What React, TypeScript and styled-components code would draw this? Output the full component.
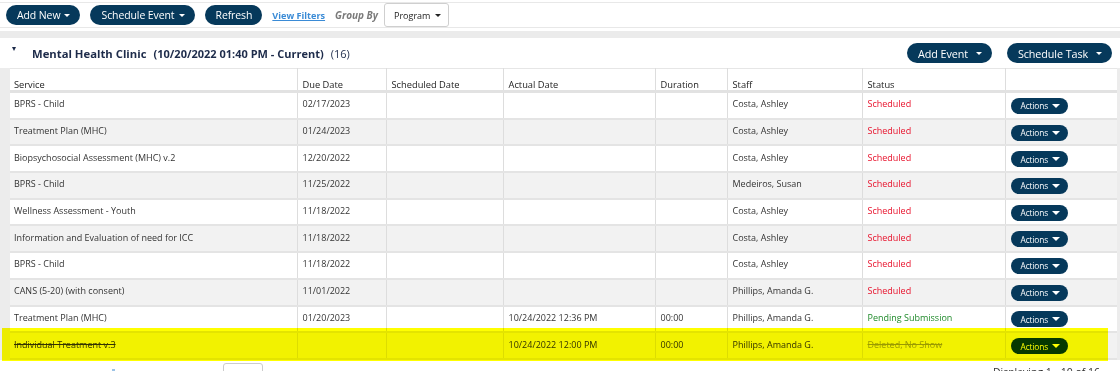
import styled, { createGlobalStyle } from 'styled-components'

const GlobalStyle = createGlobalStyle`
    body {
        margin: 0;
        background: #fff;
        font-family: 'Open Sans', 'Noto Sans', sans-serif;
        color: #333;
    }
`

const NAVY = '#06395b'

const Toolbar = styled.div`
    display: flex;
    align-items: center;
    gap: 10px;
    height: 24px;
    padding: 0 6px;
    margin-top: 2px;
    border-top: 1px solid #e8e8e8;
    border-bottom: 1px solid #e8e8e8;
`
const PillButton = styled.button<{ size?: 'sm' | 'md'; spread?: boolean }>`
    display: inline-flex;
    align-items: center;
    gap: ${p => (p.spread ? '8px' : '4px')};
    height: ${p => (p.size === 'sm' ? '16px' : '20px')};
    padding: ${p => (p.size === 'sm' ? '0 8px 0 10px' : '0 10px 0 11px')};
    border: none;
    border-radius: 10px;
    background: ${NAVY};
    color: #fff;
    font-family: 'Open Sans', sans-serif;
    font-size: ${p => (p.size === 'sm' ? '8.3px' : p.spread ? '10.8px' : '10.5px')};
    letter-spacing: -0.1px;
    white-space: nowrap;
    cursor: pointer;
`
const Caret = styled.span<{ w?: number; h?: number }>`
    width: 0;
    height: 0;
    border-left: ${p => (p.w ?? 7) / 2}px solid transparent;
    border-right: ${p => (p.w ?? 7) / 2}px solid transparent;
    border-top: ${p => p.h ?? 4}px solid currentColor;
`
const FilterLink = styled.a`
    color: #3a8bd6;
    font-weight: 700;
    font-size: 9.1px;
    text-decoration: underline;
    cursor: pointer;
`
const GroupLabel = styled.span`
    color: #7a7a7a;
    font-style: italic;
    font-weight: 700;
    font-size: 10px;
`
const Select = styled.div`
    display: flex;
    align-items: center;
    gap: 5px;
    height: 24px;
    box-sizing: border-box;
    padding: 0 7px 0 9px;
    margin-left: -4px;
    border: 1px solid #cfcfcf;
    border-radius: 3px;
    background: #fff;
    color: #222;
    font-size: 9px;
`
const Band = styled.div`
    height: 7px;
    margin-top: 3px;
    background: #ebebeb;
`
const PanelHeader = styled.div`
    display: flex;
    align-items: center;
    justify-content: space-between;
    height: 30px;
    padding: 0 8px 0 12px;
`
const Title = styled.div`
    display: flex;
    align-items: baseline;
    color: #1d2b4a;
`
const TitleCaret = styled.span`
    width: 0;
    height: 0;
    border-left: 2.5px solid transparent;
    border-right: 2.5px solid transparent;
    border-top: 4px solid #1d2b4a;
    margin-right: 16px;
    position: relative;
    top: -7px;
`
const TitleMain = styled.span`
    font-weight: 700;
    font-size: 11.3px;
    margin-right: 7px;
`
const TitleSub = styled.span<{ bold?: boolean }>`
    font-weight: ${p => (p.bold ? 700 : 400)};
    font-size: 11px;
    margin-right: 7px;
`
const HeaderActions = styled.div`
    display: flex;
    gap: 15px;
`
const Body = styled.div`
    position: relative;
    display: flex;
    padding: 0 3px 0 10px;
    background: #ececec;
`
const Table = styled.table`
    width: 1107px;
    border-collapse: collapse;
    table-layout: fixed;
    background: #fff;
    font-size: 9px;
    border-top: 1px solid #e6e6e6;
`
const Th = styled.th`
    height: 21px;
    padding: 0 4px 0 5px;
    line-height: 11px;
    text-align: left;
    vertical-align: bottom;
    font-weight: 400;
    font-size: 9.3px;
    color: #222;
    border-left: 1px solid #ddd;
    border-bottom: 3px solid #e2e2e2;
    &:first-child { border-left: none; padding-left: 4px; }
`
const Tr = styled.tr<{ striped: boolean }>`
    background: ${p => (p.striped ? '#f2f2f2' : '#fff')};
`
type Tone = 'red' | 'green' | 'gray' | 'plain'
const toneColor: Record<Tone, string> = {
    red: '#e8102a',
    green: '#1f8a2a',
    gray: '#9a9a9a',
    plain: '#333',
}
const Td = styled.td<{ tone?: Tone; struck?: boolean }>`
    height: 21.7px;
    padding: 0 4px 3px 5px;
    vertical-align: middle;
    white-space: nowrap;
    overflow: hidden;
    border-left: 1px solid #ddd;
    border-bottom: 2px solid #e4e4e4;
    color: ${p => toneColor[p.tone ?? 'plain']};
    text-decoration: ${p => (p.struck ? 'line-through' : 'none')};
    &:first-child { border-left: none; padding-left: 4px; }
`
const ActionCell = styled.td`
    padding: 1px 5px 0;
    vertical-align: middle;
    border-left: 1px solid #ddd;
    border-bottom: 2px solid #e4e4e4;
`
const Highlight = styled.div`
    position: absolute;
    left: 2px;
    right: 12px;
    bottom: -1px;
    height: 33px;
    background: #ffff00;
    mix-blend-mode: multiply;
    pointer-events: none;
`
const Footer = styled.div`
    display: flex;
    align-items: flex-start;
    justify-content: space-between;
    height: 30px;
    padding: 3px 20px 0 112px;
    font-size: 10.5px;
    color: #333;
`
const FooterLeft = styled.div`
    display: flex;
    align-items: flex-start;
`
const PagerDot = styled.span`
    width: 3px;
    height: 3px;
    margin-top: 6px;
    background: #9cc3e6;
`
const PageBox = styled.div`
    width: 38px;
    height: 20px;
    margin-left: 108px;
    border: 1px solid #ccc;
    border-radius: 3px;
`
const Displaying = styled.span`
    margin-top: 2px;
`

type Row = {
    service: string
    due: string
    actual: string
    duration: string
    staff: string
    status: string
    tone: Tone
    deleted?: boolean
}

const rows: Row[] = [
    { service: 'BPRS - Child', due: '02/17/2023', actual: '', duration: '', staff: 'Costa, Ashley', status: 'Scheduled', tone: 'red' },
    { service: 'Treatment Plan (MHC)', due: '01/24/2023', actual: '', duration: '', staff: 'Costa, Ashley', status: 'Scheduled', tone: 'red' },
    { service: 'Biopsychosocial Assessment (MHC) v.2', due: '12/20/2022', actual: '', duration: '', staff: 'Costa, Ashley', status: 'Scheduled', tone: 'red' },
    { service: 'BPRS - Child', due: '11/25/2022', actual: '', duration: '', staff: 'Medeiros, Susan', status: 'Scheduled', tone: 'red' },
    { service: 'Wellness Assessment - Youth', due: '11/18/2022', actual: '', duration: '', staff: 'Costa, Ashley', status: 'Scheduled', tone: 'red' },
    { service: 'Information and Evaluation of need for ICC', due: '11/18/2022', actual: '', duration: '', staff: 'Costa, Ashley', status: 'Scheduled', tone: 'red' },
    { service: 'BPRS - Child', due: '11/18/2022', actual: '', duration: '', staff: 'Costa, Ashley', status: 'Scheduled', tone: 'red' },
    { service: 'CANS (5-20) (with consent)', due: '11/01/2022', actual: '', duration: '', staff: 'Phillips, Amanda G.', status: 'Scheduled', tone: 'red' },
    { service: 'Treatment Plan (MHC)', due: '01/20/2023', actual: '10/24/2022 12:36 PM', duration: '00:00', staff: 'Phillips, Amanda G.', status: 'Pending Submission', tone: 'green' },
    { service: 'Individual Treatment v.3', due: '', actual: '10/24/2022 12:00 PM', duration: '00:00', staff: 'Phillips, Amanda G.', status: 'Deleted, No Show', tone: 'gray', deleted: true },
]

const columns = [
    { label: 'Service', width: 287 },
    { label: 'Due Date', width: 89 },
    { label: 'Scheduled Date', width: 117 },
    { label: 'Actual Date', width: 152 },
    { label: 'Duration', width: 72 },
    { label: 'Staff', width: 135 },
    { label: 'Status', width: 143 },
    { label: '', width: 112 },
]

export default function App() {
    return (
        <>
            <GlobalStyle />
            <Toolbar>
                <PillButton>Add New<Caret w={6} h={3.5} /></PillButton>
                <PillButton>Schedule Event<Caret w={6} h={3.5} /></PillButton>
                <PillButton>Refresh</PillButton>
                <FilterLink>View Filters</FilterLink>
                <GroupLabel>Group By</GroupLabel>
                <Select>Program<Caret w={6} h={3} /></Select>
            </Toolbar>
            <Band />
            <PanelHeader>
                <Title>
                    <TitleCaret />
                    <TitleMain>Mental Health Clinic</TitleMain>
                    <TitleSub bold>(10/20/2022 01:40 PM - Current)</TitleSub>
                    <TitleSub>(16)</TitleSub>
                </Title>
                <HeaderActions>
                    <PillButton spread>Add Event<Caret w={6} h={3.5} /></PillButton>
                    <PillButton spread>Schedule Task<Caret w={6} h={3.5} /></PillButton>
                </HeaderActions>
            </PanelHeader>
            <Body>
                <Table>
                    <colgroup>
                        {columns.map((c, i) => <col key={i} style={{ width: c.width }} />)}
                    </colgroup>
                    <thead>
                        <tr>
                            {columns.map((c, i) => <Th key={i}>{c.label}</Th>)}
                        </tr>
                    </thead>
                    <tbody>
                        {rows.map((r, i) => (
                            <Tr key={i} striped={i % 2 === 1}>
                                <Td struck={r.deleted}>{r.service}</Td>
                                <Td>{r.due}</Td>
                                <Td />
                                <Td>{r.actual}</Td>
                                <Td>{r.duration}</Td>
                                <Td>{r.staff}</Td>
                                <Td tone={r.tone} struck={r.deleted}>{r.status}</Td>
                                <ActionCell>
                                    <PillButton size="sm">Actions<Caret w={8} h={4} /></PillButton>
                                </ActionCell>
                            </Tr>
                        ))}
                    </tbody>
                </Table>
                <Highlight />
            </Body>
            <Footer>
                <FooterLeft>
                    <PagerDot />
                    <PageBox />
                </FooterLeft>
                <Displaying>Displaying 1 - 10 of 16</Displaying>
            </Footer>
        </>
    )
}
